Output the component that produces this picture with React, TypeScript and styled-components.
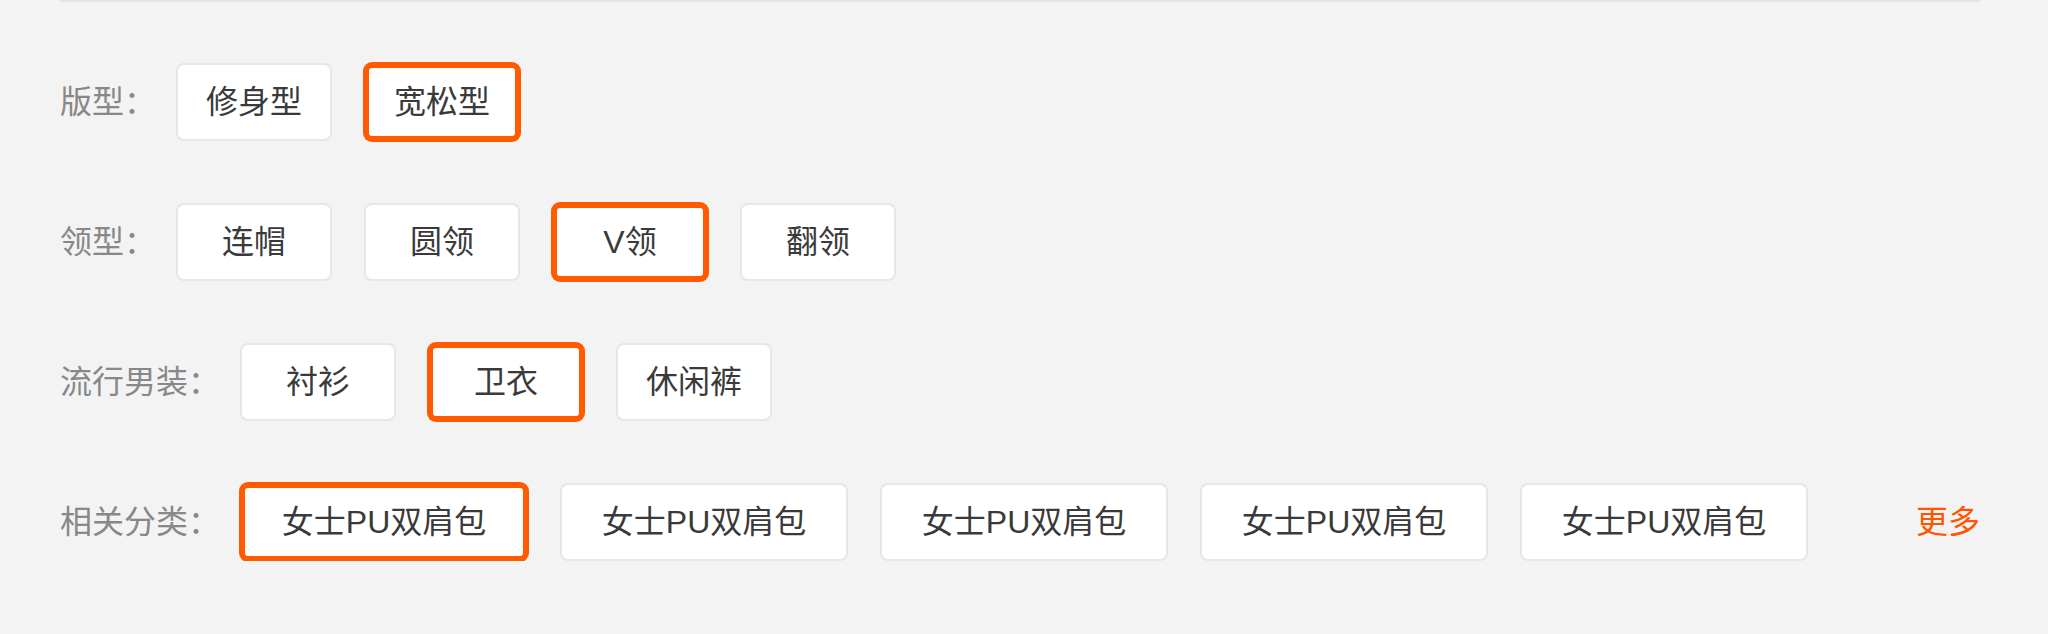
import React from "react";
import styled, { createGlobalStyle, css } from "styled-components";

const GlobalStyle = createGlobalStyle`
  html, body {
    margin: 0;
    padding: 0;
    background: #f3f3f3;
  }
  body {
    font-family: "Liberation Sans", "Noto Sans CJK SC", sans-serif;
  }
`;

const Panel = styled.section`
  width: 1920px;
  margin-left: 60px;
  border-top: 2px solid #e3e3e3;
  padding-top: 61px;
  display: flex;
  flex-direction: column;
  gap: 62px;
`;

const Row = styled.div`
  display: flex;
  align-items: center;
  height: 78px;
`;

const Label = styled.span`
  font-size: 32px;
  line-height: 1;
  color: #888888;
  margin-right: 20px;
  white-space: nowrap;
`;

const TagList = styled.div`
  display: flex;
  align-items: center;
  gap: 32px;
`;

const Tag = styled.button<{ $active?: boolean; $wide?: boolean }>`
  box-sizing: border-box;
  width: ${(p) => (p.$wide ? "288px" : "156px")};
  height: 78px;
  padding: 0;
  display: flex;
  align-items: center;
  justify-content: center;
  background: #ffffff;
  border: 2px solid #e4e8e8;
  border-radius: 8px;
  font-family: inherit;
  font-size: 32px;
  line-height: 1;
  color: #3a3a3a;
  cursor: pointer;
  white-space: nowrap;
  ${(p) =>
    p.$active &&
    css`
      border: 5px solid #ff5a00;
      box-shadow: 0 0 0 1px #ff5a00;
      border-radius: 8px;
    `}
`;

const More = styled.a`
  margin-left: auto;
  font-size: 32px;
  line-height: 1;
  color: #ff5500;
  text-decoration: none;
  cursor: pointer;
`;

type Group = {
  label: string;
  items: string[];
  active: number;
  wide?: boolean;
  more?: boolean;
};

const groups: Group[] = [
  { label: "版型：", items: ["修身型", "宽松型"], active: 1 },
  { label: "领型：", items: ["连帽", "圆领", "V领", "翻领"], active: 2 },
  { label: "流行男装：", items: ["衬衫", "卫衣", "休闲裤"], active: 1 },
  {
    label: "相关分类：",
    items: ["女士PU双肩包", "女士PU双肩包", "女士PU双肩包", "女士PU双肩包", "女士PU双肩包"],
    active: 0,
    wide: true,
    more: true,
  },
];

export default function App() {
  return (
    <>
      <GlobalStyle />
      <Panel>
        {groups.map((g) => (
          <Row key={g.label}>
            <Label>{g.label}</Label>
            <TagList>
              {g.items.map((item, i) => (
                <Tag key={i} $active={i === g.active} $wide={g.wide}>
                  {item}
                </Tag>
              ))}
            </TagList>
            {g.more && <More>更多</More>}
          </Row>
        ))}
      </Panel>
    </>
  );
}
